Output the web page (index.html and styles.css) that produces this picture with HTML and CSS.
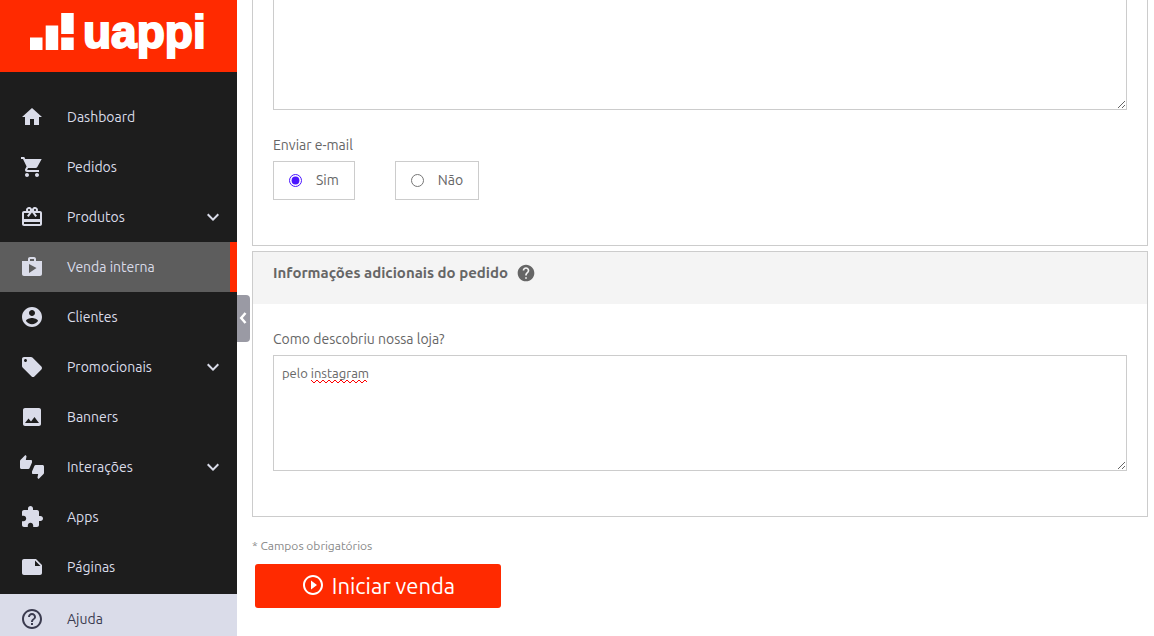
FILE: index.html
```html
<!DOCTYPE html>
<html lang="pt-BR">
<head>
  <meta charset="UTF-8" />
  <title>Venda interna</title>
  <meta name="viewport" content="width=device-width, initial-scale=1.0" />
  <link rel="stylesheet" href="styles.css">
</head>
<body>

<div class="layout">
  <!-- Sidebar -->
  <aside class="sidebar">
    <a class="logo" href="#">
      <svg class="logo-bars" viewBox="0 0 44 37" width="44" height="37">
        <path d="M0 24.500h12.500V37H0zM15.700 12.500h12.500V37H15.700zM31.200 0h12.500v21H31.200zM31.200 24.500h12.500V37H31.200z"/>
      </svg>
      <span class="logo-name">uappi</span>
    </a>

    <nav class="menu">
      <a class="menu-item" href="#">
        <svg class="icon" viewBox="0 0 24 24"><path d="M10 20v-6h4v6h5v-8h3L12 3 2 12h3v8z"/></svg>
        <span>Dashboard</span>
      </a>
      <a class="menu-item" href="#">
        <svg class="icon" viewBox="0 0 24 24"><path d="M7 18c-1.100 0-1.990.9-1.990 2S5.900 22 7 22s2-.9 2-2-.9-2-2-2zM1 2v2h2l3.600 7.590-1.350 2.450c-.16.28-.25.61-.25.96 0 1.100.9 2 2 2h12v-2H7.420c-.14 0-.25-.11-.25-.25l.03-.12.9-1.630h7.450c.75 0 1.410-.41 1.750-1.030L21.700 4H5.210l-.94-2H1zm16 16c-1.100 0-1.990.9-1.990 2s.89 2 1.990 2 2-.9 2-2-.9-2-2-2z"/></svg>
        <span>Pedidos</span>
      </a>
      <a class="menu-item" href="#">
        <svg class="icon" viewBox="0 0 24 24"><path d="M20 6h-2.180c.11-.31.18-.65.18-1 0-1.660-1.340-3-3-3-1.050 0-1.960.54-2.500 1.350l-.5.670-.5-.68C10.960 2.540 10.050 2 9 2 7.340 2 6 3.340 6 5c0 .35.07.69.18 1H4c-1.110 0-1.990.89-1.990 2L2 19c0 1.110.89 2 2 2h16c1.110 0 2-.89 2-2V8c0-1.110-.89-2-2-2zm-5-2c.55 0 1 .45 1 1s-.45 1-1 1-1-.45-1-1 .45-1 1-1zM9 4c.55 0 1 .45 1 1s-.45 1-1 1-1-.45-1-1 .45-1 1-1zm11 15H4v-2h16v2zm0-5H4V8h5.080L7 10.830 8.620 12 11 8.760l1-1.360 1 1.360L15.380 12 17 10.830 14.920 8H20v6z"/></svg>
        <span>Produtos</span>
        <svg class="icon arrow" viewBox="0 0 24 24"><path d="M7.410 8.590 12 13.170l4.590-4.580L18 10l-6 6-6-6z"/></svg>
      </a>
      <a class="menu-item active" href="#">
        <svg class="icon" viewBox="0 0 24 24"><path d="M16 6V4c0-1.110-.89-2-2-2h-4c-1.110 0-2 .89-2 2v2H2v13c0 1.110.89 2 2 2h16c1.110 0 2-.89 2-2V6h-6zm-6-2h4v2h-4V4zM9 18V9l7.500 4L9 18z"/></svg>
        <span>Venda interna</span>
      </a>
      <a class="menu-item" href="#">
        <svg class="icon" viewBox="0 0 24 24"><path d="M12 2C6.480 2 2 6.480 2 12s4.480 10 10 10 10-4.480 10-10S17.520 2 12 2zm0 3c1.660 0 3 1.340 3 3s-1.340 3-3 3-3-1.340-3-3 1.340-3 3-3zm0 14.200c-2.500 0-4.710-1.280-6-3.220.03-1.990 4-3.080 6-3.080 1.990 0 5.970 1.090 6 3.080-1.290 1.940-3.500 3.220-6 3.220z"/></svg>
        <span>Clientes</span>
      </a>
      <a class="menu-item" href="#">
        <svg class="icon" viewBox="0 0 24 24"><path d="M21.410 11.580l-9-9C12.050 2.220 11.550 2 11 2H4c-1.100 0-2 .9-2 2v7c0 .55.22 1.050.59 1.420l9 9c.36.36.86.58 1.410.58.55 0 1.050-.22 1.410-.59l7-7c.37-.36.59-.86.59-1.410 0-.55-.23-1.060-.59-1.420zM5.500 7C4.670 7 4 6.330 4 5.500S4.670 4 5.500 4 7 4.670 7 5.500 6.330 7 5.500 7z"/></svg>
        <span>Promocionais</span>
        <svg class="icon arrow" viewBox="0 0 24 24"><path d="M7.410 8.590 12 13.170l4.590-4.580L18 10l-6 6-6-6z"/></svg>
      </a>
      <a class="menu-item" href="#">
        <svg class="icon" viewBox="0 0 24 24"><path d="M21 19V5c0-1.100-.9-2-2-2H5c-1.100 0-2 .9-2 2v14c0 1.100.9 2 2 2h14c1.100 0 2-.9 2-2zM8.500 13.500l2.500 3.010L14.500 12l4.500 6H5l3.500-4.500z"/></svg>
        <span>Banners</span>
      </a>
      <a class="menu-item" href="#">
        <svg class="icon" viewBox="0 0 24 24"><path d="M12 6c0-.55-.45-1-1-1H5.820l.66-3.180.02-.23c0-.31-.13-.59-.33-.8L5.380 0 .44 4.940C.17 5.210 0 5.590 0 6v6.500c0 .83.67 1.500 1.500 1.500h6.750c.62 0 1.150-.38 1.380-.91l2.260-5.290c.07-.17.11-.36.11-.55V6zm10.500 4h-6.750c-.62 0-1.150.38-1.380.91l-2.260 5.290c-.07.17-.11.36-.11.55V18c0 .55.45 1 1 1h5.180l-.66 3.180-.02.24c0 .31.13.59.33.8l.79.780 4.940-4.940c.27-.27.44-.65.44-1.060v-6.500c0-.83-.67-1.500-1.500-1.500z"/></svg>
        <span>Interações</span>
        <svg class="icon arrow" viewBox="0 0 24 24"><path d="M7.410 8.590 12 13.170l4.590-4.580L18 10l-6 6-6-6z"/></svg>
      </a>
      <a class="menu-item" href="#">
        <svg class="icon" viewBox="0 0 24 24"><path d="M20.500 11H19V7c0-1.100-.9-2-2-2h-4V3.500C13 2.120 11.880 1 10.500 1S8 2.120 8 3.500V5H4c-1.100 0-1.990.9-1.990 2v3.800H3.500c1.490 0 2.700 1.210 2.700 2.700s-1.210 2.700-2.700 2.700H2V20c0 1.100.9 2 2 2h3.800v-1.500c0-1.490 1.210-2.700 2.700-2.700 1.490 0 2.700 1.210 2.700 2.700V22H17c1.100 0 2-.9 2-2v-4h1.500c1.380 0 2.500-1.120 2.500-2.500S21.880 11 20.500 11z"/></svg>
        <span>Apps</span>
      </a>
      <a class="menu-item" href="#">
        <svg class="icon" viewBox="0 0 24 24"><path d="M22 10l-6-6H4c-1.100 0-2 .9-2 2v12.010c0 1.100.9 1.990 2 1.990l16-.010c1.100 0 2-.89 2-1.990v-8zm-7-4.500l5.500 5.500H15V5.500z"/></svg>
        <span>Páginas</span>
      </a>
    </nav>

    <a class="menu-item help" href="#">
      <svg class="icon" viewBox="0 0 24 24"><path d="M11 18h2v-2h-2v2zm1-16C6.480 2 2 6.480 2 12s4.480 10 10 10 10-4.480 10-10S17.520 2 12 2zm0 18c-4.410 0-8-3.590-8-8s3.590-8 8-8 8 3.590 8 8-3.590 8-8 8zm0-14c-2.210 0-4 1.790-4 4h2c0-1.100.9-2 2-2s2 .9 2 2c0 2-3 1.750-3 5h2c0-2.250 3-2.500 3-5 0-2.210-1.790-4-4-4z"/></svg>
      <span>Ajuda</span>
    </a>
  </aside>

  <button class="collapse" type="button" aria-label="Recolher menu">
    <svg viewBox="0 0 8 12" width="8" height="12"><path d="M6.500 1 2.200 6l4.300 5"/></svg>
  </button>

  <!-- Content -->
  <main class="content">
    <section class="panel panel-first">
      <textarea class="field field-notes" aria-label="Observações"></textarea>

      <fieldset class="email">
        <legend class="label">Enviar e-mail</legend>
        <div class="options">
          <label class="option"><input type="radio" name="email" checked /> <span>Sim</span></label>
          <label class="option"><input type="radio" name="email" /> <span>Não</span></label>
        </div>
      </fieldset>
    </section>

    <section class="panel">
      <header class="panel-header">
        <h2>Informações adicionais do pedido</h2>
        <svg class="icon hint" viewBox="0 0 24 24"><path d="M12 2C6.480 2 2 6.480 2 12s4.480 10 10 10 10-4.480 10-10S17.520 2 12 2zm1 17h-2v-2h2v2zm2.070-7.750l-.9.920C13.450 12.900 13 13.500 13 15h-2v-.5c0-1.100.45-2.100 1.170-2.830l1.240-1.260c.37-.36.59-.86.59-1.410 0-1.100-.9-2-2-2s-2 .9-2 2H8c0-2.210 1.790-4 4-4s4 1.790 4 4c0 .88-.36 1.680-.93 2.250z"/></svg>
      </header>
      <div class="panel-body">
        <label class="label" for="origem">Como descobriu nossa loja?</label>
        <div class="field-wrap">
          <textarea class="field" id="origem" spellcheck="false">pelo instagram</textarea>
          <svg class="squiggle" viewBox="0 0 60 5" width="60" height="5"><path d="M0 1l3 3 3-3 3 3 3-3 3 3 3-3 3 3 3-3 3 3 3-3 3 3 3-3 3 3 3-3 3 3 3-3 3 3 3-3 2 2"/></svg>
        </div>
      </div>
    </section>

    <p class="required">* Campos obrigatórios</p>
    <button class="start" type="button">
      <svg class="icon" viewBox="0 0 24 24"><path d="M10 16.500l6-4.500-6-4.500v9zM12 2C6.480 2 2 6.480 2 12s4.480 10 10 10 10-4.480 10-10S17.520 2 12 2zm0 18c-4.410 0-8-3.590-8-8s3.590-8 8-8 8 3.590 8 8-3.590 8-8 8z"/></svg>
      <span>Iniciar venda</span>
    </button>
  </main>
</div>

</body>
</html>
```

FILE: styles.css
```css
* {
  box-sizing: border-box;
}

body {
  margin: 0;
  font-family: Ubuntu, 'Noto Sans', sans-serif;
  font-size: 14px;
  line-height: 20px;
  color: #666;
  background: #fff;
}

.layout {
  display: flex;
  position: relative;
  height: 100vh;
  overflow: hidden;
}

.icon {
  width: 24px;
  height: 24px;
  flex-shrink: 0;
  fill: currentColor;
}

/* Sidebar */
.sidebar {
  width: 237px;
  flex-shrink: 0;
  display: flex;
  flex-direction: column;
  overflow: hidden;
  background: #1d1d1d;
}

.logo {
  display: flex;
  flex-shrink: 0;
  height: 72px;
  padding: 13px 30px;
  gap: 9px;
  background: #ff2a00;
  color: #fff;
  text-decoration: none;
}

.logo-bars {
  fill: #fff;
}

.logo-name {
  font-family: 'Liberation Sans', Arial, sans-serif;
  font-size: 46px;
  font-weight: 700;
  line-height: 38px;
  -webkit-text-stroke: 2px #fff;
}

.menu {
  flex-shrink: 0;
  padding: 20px 0 2px;
}

.menu-item {
  display: flex;
  align-items: center;
  flex-shrink: 0;
  height: 50px;
  padding: 0 12px 0 20px;
  gap: 23px;
  color: #dadce9;
  text-decoration: none;
}

.menu-item.active {
  background: #5d5d5d;
  border-right: 7px solid #ff2a00;
}

.menu-item .arrow {
  margin-left: auto;
}

.menu-item.help {
  background: #dadce9;
  color: #3b3b4f;
}

.collapse {
  position: absolute;
  top: 50%;
  left: 237px;
  display: flex;
  align-items: center;
  width: 13px;
  height: 47px;
  margin-top: -23px;
  padding: 0 0 2px 2px;
  border: none;
  border-radius: 0 4px 4px 0;
  background: #9a9aa4;
  cursor: pointer;
}

.collapse path {
  fill: none;
  stroke: #fff;
  stroke-width: 2.500;
}

/* Content */
.content {
  flex: 1;
  min-width: 0;
  padding: 0 6px 0 15px;
}

.panel {
  margin-bottom: 5px;
  border: 1px solid #ccc;
}

.panel-first {
  padding: 0 20px 45px;
  border-top: none;
}

.panel-header {
  display: flex;
  height: 52px;
  padding: 11px 20px;
  gap: 8px;
  background: #f4f4f4;
}

.panel-header h2 {
  margin: 0;
  font-size: 15px;
  line-height: 20px;
}

.hint {
  width: 20px;
  height: 20px;
}

.panel-body {
  padding: 25px 20px 45px;
}

.label {
  display: block;
  padding: 0 0 6px;
}

.field-wrap {
  position: relative;
}

.field {
  display: block;
  width: 100%;
  height: 116px;
  padding: 7px 8px;
  border: 1px solid #ccc;
  color: #666;
  font-family: inherit;
  font-size: 13px;
  line-height: 20px;
}

.field-notes {
  height: 110px;
  border-top: none;
}

/* spelling mark under the second word */
.squiggle {
  position: absolute;
  top: 24px;
  left: 38px;
  fill: none;
  stroke: #f00;
  pointer-events: none;
}

.email {
  margin: 25px 0 0;
  padding: 0;
  border: none;
}

.options {
  display: flex;
  gap: 40px;
}

.option {
  display: flex;
  align-items: center;
  height: 39px;
  padding: 0 15px 1px;
  gap: 14px;
  border: 1px solid #ccc;
}

.option input {
  margin: 0;
  accent-color: #4b16ff;
}

.required {
  margin: 19px 0 8px;
  font-size: 12px;
  color: #888;
}

.start {
  display: flex;
  align-items: center;
  justify-content: center;
  width: 246px;
  height: 44px;
  margin-left: 3px;
  padding: 0 0 2px;
  gap: 7px;
  border: none;
  border-radius: 3px;
  background: #ff2a00;
  color: #fff;
  font-family: inherit;
  font-size: 22px;
  cursor: pointer;
}
```
